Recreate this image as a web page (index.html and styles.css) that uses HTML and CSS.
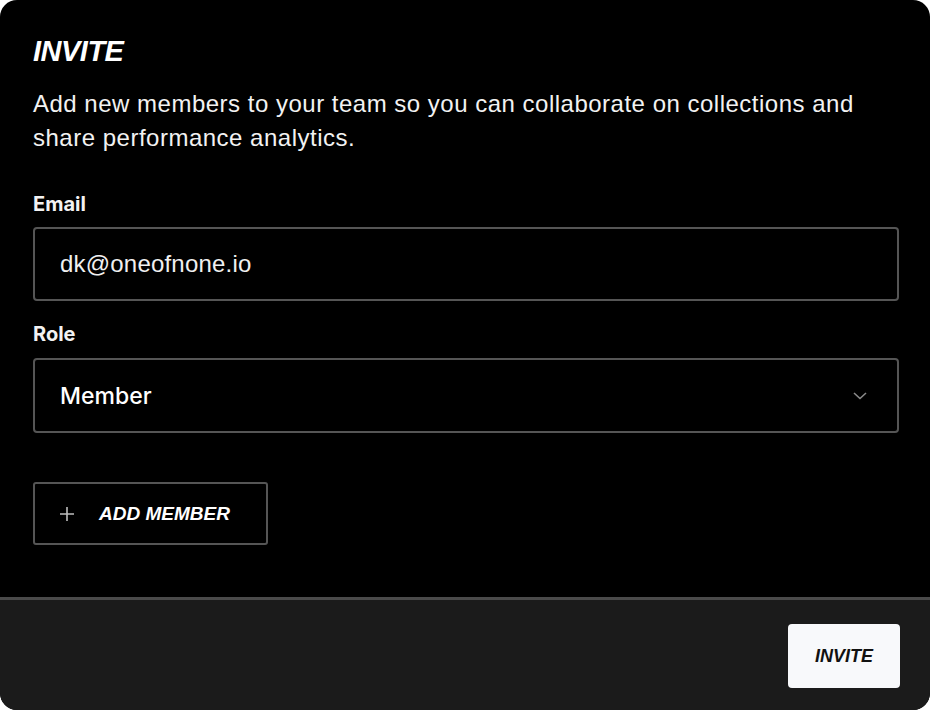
FILE: index.html
```html
<!DOCTYPE html>
<html>
<head>
<meta charset="utf-8">
<link rel="stylesheet" href="styles.css">
</head>
<body>
<div class="modal">
  <div class="body">
    <h1 class="title">INVITE</h1>
    <p class="desc">Add new members to your team so you can collaborate on collections and share performance analytics.</p>
    <label class="label">Email</label>
    <div class="field"><span class="email">dk@oneofnone.io</span></div>
    <label class="label role">Role</label>
    <div class="field select">
      <span class="member">Member</span>
      <svg class="chev" width="14" height="8" viewBox="0 0 14 8"><path d="M1 1 L7 6.5 L13 1" fill="none" stroke="#8a8a8a" stroke-width="1.6"/></svg>
    </div>
    <button class="add">
      <svg class="plus" width="16" height="16" viewBox="0 0 16 16"><path d="M8 1 V15 M1 8 H15" stroke="#bdbdbd" stroke-width="1.6"/></svg>
      <span>ADD MEMBER</span>
    </button>
  </div>
  <div class="footer">
    <button class="invite">INVITE</button>
  </div>
</div>
</body>
</html>
```
FILE: styles.css
```css
html, body { margin: 0; padding: 0; background: #ffffff; }
body { width: 930px; height: 710px; overflow: hidden; }
.modal {
  width: 930px; height: 710px; border-radius: 17px; overflow: hidden;
  background: #000; display: flex; flex-direction: column;
  font-family: "Liberation Sans", Arial, sans-serif; color: #fff;
}
.body { flex: 1; padding: 34px 31px 0 33px; display: flex; flex-direction: column; align-items: flex-start; }
.title { margin: 0; font-size: 29px; font-weight: 700; font-style: italic; line-height: 34px; letter-spacing: -0.5px; }
.desc { margin: 19px 0 0; font-size: 24px; line-height: 34px; color: #f2f2f2; width: 862px; letter-spacing: 0.5px; }
.label { display: block; margin-top: 36px; font-family: Inter, sans-serif; font-weight: 700; font-size: 20px; line-height: 26px; color: #f2f2f2; }
.label.role { margin-top: 20px; }
.field {
  box-sizing: border-box; width: 866px; height: 74px; margin-top: 10px;
  border: 2px solid #555; border-radius: 4px; display: flex; align-items: center;
  padding: 0 30px 0 25px;
}
.email { font-size: 24px; letter-spacing: 0.2px; color: #f0f0f0; }
.select { justify-content: space-between; height: 75px; margin-top: 11px; }
.member { font-family: Inter, sans-serif; font-weight: 500; font-size: 23px; color: #fff; }
.add {
  margin-top: 49px; box-sizing: border-box; width: 235px; height: 63px;
  background: transparent; border: 2px solid #555; border-radius: 3px;
  display: flex; align-items: center; padding: 0 0 0 24px; gap: 24px; color: #fff;
  font-family: "Liberation Sans", Arial, sans-serif; font-weight: 700; font-style: italic; font-size: 19px;
}
.footer {
  height: 113px; box-sizing: border-box; background: #1b1b1b; border-top: 3px solid #4a4a4a;
  display: flex; justify-content: flex-end; align-items: flex-start; padding: 24px 30px 0 0;
}
.invite {
  width: 112px; height: 64px; background: #f8f9fb; border: none; border-radius: 4px;
  color: #111; font-family: "Liberation Sans", Arial, sans-serif; font-weight: 700; font-style: italic; font-size: 18px;
}
```
